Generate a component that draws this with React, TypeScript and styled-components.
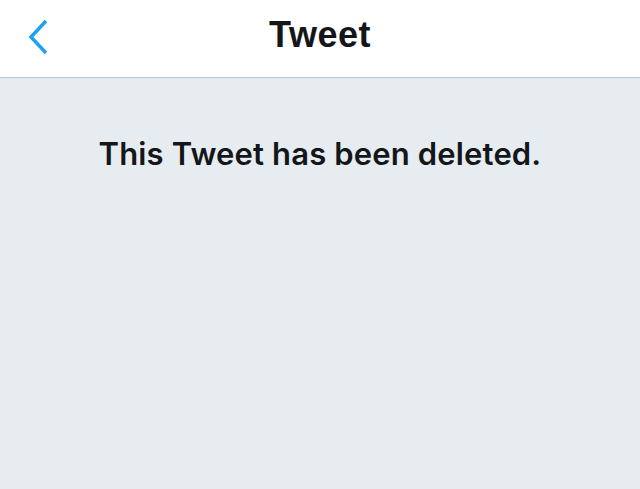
import React from "react";
import styled, { createGlobalStyle } from "styled-components";

const Global = createGlobalStyle`
  html, body { margin: 0; padding: 0; }
  body { background: #e6ecf0; font-family: Inter, "Liberation Sans", sans-serif; }
`;

const Page = styled.div`
  width: 640px;
  height: 489px;
  display: flex;
  flex-direction: column;
  background: #e6ecf0;
`;

const Header = styled.header`
  height: 77px;
  flex: none;
  background: #ffffff;
  border-bottom: 1px solid #bcc6cf;
  display: grid;
  grid-template-columns: 80px 1fr 80px;
  align-items: center;
`;

const BackButton = styled.button`
  border: 0;
  background: none;
  padding: 0 0 4px 28px;
  display: flex;
  align-items: center;
  cursor: pointer;
`;

const Title = styled.h1`
  margin: 0 0 8px;
  text-align: center;
  font-family: "Liberation Sans", Arial, sans-serif;
  font-weight: 700;
  font-size: 36px;
  color: #14171a;
  letter-spacing: 0.5px;
`;

const Body = styled.main`
  flex: 1;
  display: flex;
  justify-content: center;
  padding-top: 56px;
`;

const Message = styled.p`
  margin: 0;
  font-family: Inter, "Liberation Sans", sans-serif;
  font-weight: 600;
  font-size: 31px;
  line-height: 40px;
  color: #14171a;
  letter-spacing: 0.15px;
`;

export default function App() {
  return (
    <>
      <Global />
      <Page>
        <Header>
          <BackButton aria-label="Back">
            <svg width="22" height="36" viewBox="0 0 22 36">
              <path d="M18 2 L3 18 L18 34" fill="none" stroke="#1da1f2" strokeWidth="3.5" strokeLinecap="butt" strokeLinejoin="miter" />
            </svg>
          </BackButton>
          <Title>Tweet</Title>
          <span />
        </Header>
        <Body>
          <Message>This Tweet has been deleted.</Message>
        </Body>
      </Page>
    </>
  );
}
